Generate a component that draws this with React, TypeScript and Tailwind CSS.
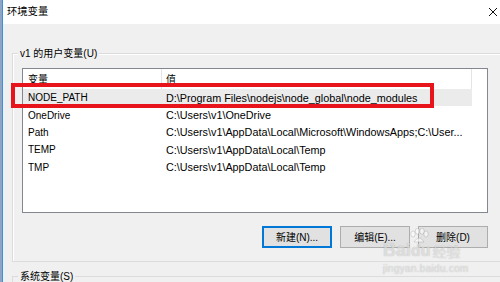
import React from "react";

const rows = [
  { name: "NODE_PATH", value: "D:\\Program Files\\nodejs\\node_global\\node_modules", sel: true },
  { name: "OneDrive", value: "C:\\Users\\v1\\OneDrive" },
  { name: "Path", value: "C:\\Users\\v1\\AppData\\Local\\Microsoft\\WindowsApps;C:\\User..." },
  { name: "TEMP", value: "C:\\Users\\v1\\AppData\\Local\\Temp" },
  { name: "TMP", value: "C:\\Users\\v1\\AppData\\Local\\Temp" },
];

function Btn({ label, def }: { label: string; def?: boolean }) {
  return (
    <div
      className={`w-[70px] h-[22px] shrink-0 flex items-center justify-center bg-[#e1e1e1] text-[10px] text-black ${
        def ? "border-2 border-[#0078d7]" : "border border-[#adadad]"
      }`}
    >
      {label}
    </div>
  );
}

export default function App() {
  return (
    <div
      className="relative w-[500px] h-[282px] overflow-hidden bg-[#f0f0f0] flex text-black"
      style={{ fontFamily: "'Liberation Sans','Noto Sans CJK SC',sans-serif" }}
    >
      <div className="w-[2px] h-full shrink-0 bg-[#8ea6c4]" />
      <div className="w-[1px] h-full shrink-0 bg-[#3f8fdc]" />
      <div className="flex-1 flex flex-col min-h-0">
        <div className="h-[24px] shrink-0 bg-white flex items-center justify-between pl-[4px] pr-[2px]">
          <span className="text-[10.3px] leading-none">环境变量</span>
          <svg width="10" height="10" viewBox="0 0 10 10">
            <path d="M1 1L9 9M9 1L1 9" stroke="#111" strokeWidth="1" />
          </svg>
        </div>
        {/* user vars group */}
        <div className="relative shrink-0 ml-[9px] mr-[-20px] mt-[29px] h-[209px] border border-[#dcdcdc] shadow-[inset_1px_1px_0_#ffffff]">
          <span className="absolute -top-[6px] left-[5px] px-[2px] bg-[#f0f0f0] text-[10px] leading-[12px]">
            v1 的用户变量(U)
          </span>
          <div className="ml-[9px] mt-[14px] w-[466px] h-[145px] border border-[#828790] bg-white flex flex-col">
            <div className="h-[20px] flex text-[10px] shrink-0">
              <div className="w-[139px] border-r border-[#e5e5e5] pl-[5px] flex items-center">变量</div>
              <div className="w-[310px] border-r border-[#e5e5e5] pl-[4px] flex items-center">值</div>
            </div>
            {rows.map((r) => (
              <div
                key={r.name}
                className={`h-[17.4px] shrink-0 w-[449px] flex items-center whitespace-nowrap ${
                  r.sel ? "bg-[#ebebeb]" : ""
                }`}
              >
                <div className="w-[140px] pl-[5px] text-[10px]">{r.name}</div>
                <div className="pl-[3px] text-[10.8px]">{r.value}</div>
              </div>
            ))}
          </div>
          <div className="mt-[13px] w-[475px] flex justify-end gap-[8px]">
            <Btn label="新建(N)..." def />
            <Btn label="编辑(E)..." />
            <Btn label="删除(D)" />
          </div>
        </div>
        {/* system vars group */}
        <div className="relative shrink-0 ml-[9px] mr-[-20px] mt-[14px] h-[40px] border border-[#dcdcdc]">
          <span className="absolute -top-[6px] left-[5px] px-[2px] bg-[#f0f0f0] text-[10px] leading-[12px]">
            系统变量(S)
          </span>
        </div>
      </div>

      {/* red annotation */}
      <div className="absolute left-[11px] top-[83px] w-[423px] h-[25px] border-4 border-[#e8141c]" />

      {/* watermark */}
      <div className="absolute left-[383px] top-[241px] flex flex-col items-start pointer-events-none text-white/60 [text-shadow:0_0_1px_rgba(0,0,0,0.3)]">
        <div className="flex items-end leading-none">
          <span className="text-[18px] font-bold">Bai</span>
          <span className="relative text-[16px] font-bold">
            <svg width="20" height="16" viewBox="0 0 20 16" className="absolute -top-[15px] left-[-2px]">
              <g fill="rgba(255,255,255,0.6)" stroke="rgba(0,0,0,0.22)" strokeWidth="0.6">
                <ellipse cx="4" cy="6" rx="2.2" ry="3" />
                <ellipse cx="8.5" cy="3.2" rx="2.2" ry="3" />
                <ellipse cx="13" cy="3.2" rx="2.2" ry="3" />
                <ellipse cx="17" cy="6" rx="2.2" ry="3" />
                <path d="M5 14 Q10 6 15 14 Z" />
              </g>
            </svg>
            du
          </span>
          <span className="text-[14px] ml-[2px]">经验</span>
        </div>
        <span className="text-[10px] mt-[2px] tracking-[0.3px]">jingyan.baidu.com</span>
      </div>
    </div>
  );
}
